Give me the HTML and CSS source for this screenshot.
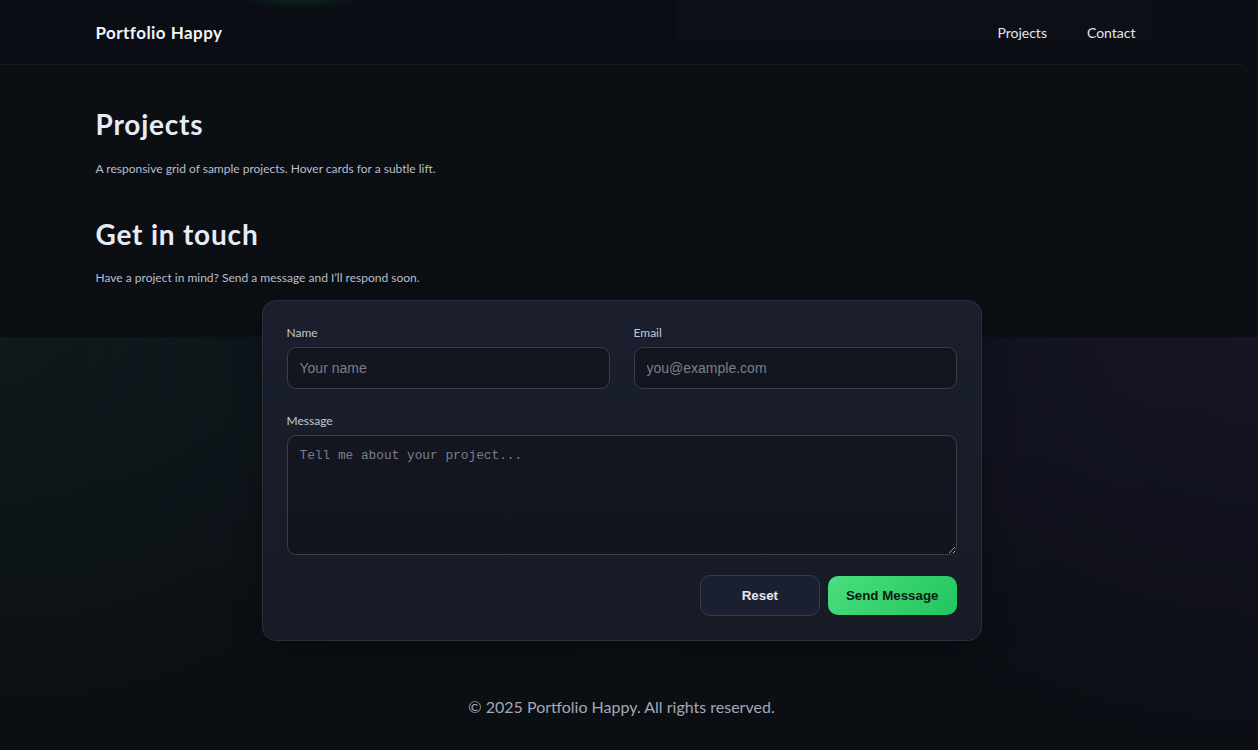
FILE: index.html
```html
<!DOCTYPE html>
<html lang="en">
<head>
<meta charset="utf-8">
<title>Portfolio Happy</title>
<link rel="stylesheet" href="styles.css">
</head>
<body>
<header class="site-header">
  <div class="container header-row">
    <a class="brand" href="#">Portfolio Happy</a>
    <nav class="nav">
      <a href="#projects">Projects</a>
      <a href="#contact">Contact</a>
    </nav>
  </div>
</header>
<main>
  <section id="projects" class="section section-projects container">
    <h2 class="section-title">Projects</h2>
    <p class="lead">A responsive grid of sample projects. Hover cards for a subtle lift.</p>
  </section>

  <section id="contact" class="section section-contact container">
    <h2 class="section-title">Get in touch</h2>
    <p class="lead">Have a project in mind? Send a message and I’ll respond soon.</p>
    <form class="contact-card" onsubmit="return false">
      <div class="row">
        <label class="field">
          <span class="label">Name</span>
          <input class="input" type="text" placeholder="Your name">
        </label>
        <label class="field">
          <span class="label">Email</span>
          <input class="input" type="email" placeholder="you@example.com">
        </label>
      </div>
      <label class="field">
        <span class="label">Message</span>
        <textarea class="textarea" placeholder="Tell me about your project..."></textarea>
      </label>
      <div class="actions">
        <button class="btn btn-ghost" type="reset">Reset</button>
        <button class="btn btn-primary" type="submit">Send Message</button>
      </div>
    </form>
  </section>
</main>
<footer class="site-footer">
  <p>© 2025 Portfolio Happy. All rights reserved.</p>
</footer>
</body>
</html>
```

FILE: styles.css
```css
html {
  color-scheme: dark;
  overflow-y: scroll;
}

body {
  margin: 0 15px 0 0;
  font-family: Lato, "Noto Sans", sans-serif;
  color: #e6e9f0;
  background:
    radial-gradient(55% 75% at 0% 0%, rgba(60, 170, 130, 0.075), transparent 75%) 0 337px / 100% 750px no-repeat,
    radial-gradient(55% 75% at 100% 0%, rgba(139, 92, 246, 0.085), transparent 75%) 0 337px / 100% 750px no-repeat,
    radial-gradient(60% 60% at 50% 0%, rgba(99, 102, 241, 0.04), transparent 80%) 0 337px / 100% 750px no-repeat,
    #0b0e13;
}

.container {
  max-width: 1100px;
  margin: 0 auto;
  padding: 0 24px;
  box-sizing: border-box;
}

/* header */
.site-header {
  background:
    radial-gradient(64px 9px at calc(50% - 320px) 0, rgba(34, 197, 94, 0.12), transparent) 0 0 / 100% 64px no-repeat,
    linear-gradient(180deg, rgba(255, 255, 255, 0.012) 0, rgba(255, 255, 255, 0.012) 36px, transparent 48px) calc(50% + 292px) 0 / 476px 64px no-repeat,
    #0a0d14;
  border-bottom: 1px solid rgba(255, 255, 255, 0.06);
}

.header-row {
  height: 64px;
  display: flex;
  align-items: center;
  justify-content: space-between;
}

.brand {
  color: #f3f4f6;
  font-weight: 700;
  font-size: 17px;
  letter-spacing: 0.45px;
  text-decoration: none;
}

.nav {
  display: flex;
  gap: 16px;
}

.nav a {
  color: #e5e7eb;
  font-size: 14px;
  text-decoration: none;
  padding: 8px 12px;
}

/* sections */
.section-title {
  margin: 0 0 18px;
  font-size: 28px;
  line-height: 1.2;
  font-weight: 700;
  letter-spacing: 0.8px;
  color: #e8ebf3;
}

.lead {
  margin: 0;
  font-size: 12px;
  line-height: 18px;
  color: #b8bfcc;
}

.section-projects {
  padding-top: 43px;
}

.section-contact {
  padding-top: 40px;
  padding-bottom: 24px;
}

.section-contact .lead {
  margin-bottom: 13px;
}

/* form card */
.contact-card {
  max-width: 720px;
  margin: 0 auto;
  box-sizing: border-box;
  padding: 24px;
  border-radius: 14px;
  border: 1px solid #2a2f3c;
  background: linear-gradient(180deg, #1b1f2d 0%, #161b26 100%);
  box-shadow: 0 10px 30px rgba(0, 0, 0, 0.25);
  display: flex;
  flex-direction: column;
  gap: 20px;
}

.row {
  display: grid;
  grid-template-columns: 1fr 1fr;
  gap: 24px;
  margin-bottom: 4px;
}

.field {
  display: flex;
  flex-direction: column;
}

.label {
  font-size: 12px;
  line-height: 16px;
  color: #c2c7d2;
  margin-bottom: 6px;
}

.input,
.textarea {
  box-sizing: border-box;
  width: 100%;
  border: 1px solid #383d4b;
  border-radius: 9px;
  background: #13151f;
  color: #e5e7eb;
  padding: 0 12px;
  outline: none;
}

.input {
  height: 42px;
  font-family: "Liberation Sans", Arial, sans-serif;
  font-size: 14px;
}

.textarea {
  display: block;
  height: 120px;
  padding: 12px;
  resize: vertical;
  font-family: "Liberation Mono", monospace;
  font-size: 12.8px;
  line-height: 16px;
  background: linear-gradient(180deg, #141620 0%, #11151e 100%);
}

.input::placeholder,
.textarea::placeholder {
  color: #7a7f8b;
}

.actions {
  display: flex;
  justify-content: flex-end;
  align-items: center;
  gap: 8px;
}

.btn {
  min-width: 120px;
  padding: 0 18px;
  border-radius: 10px;
  font-family: "Liberation Sans", Arial, sans-serif;
  font-size: 13.33px;
  font-weight: 700;
  cursor: pointer;
}

.btn-ghost {
  border: 1px solid #363b4b;
  background: #1b2030;
  color: #e5e7eb;
  height: 41px;
}

.btn-primary {
  border: none;
  background: linear-gradient(135deg, #4ade80 0%, #22c55e 100%);
  color: #0b1a10;
  height: 39px;
}

/* footer */
.site-footer {
  padding: 30px 0 30px;
  text-align: center;
}

.site-footer p {
  margin: 0;
  font-size: 16px;
  line-height: 24px;
  color: #a3a9b7;
}
```
